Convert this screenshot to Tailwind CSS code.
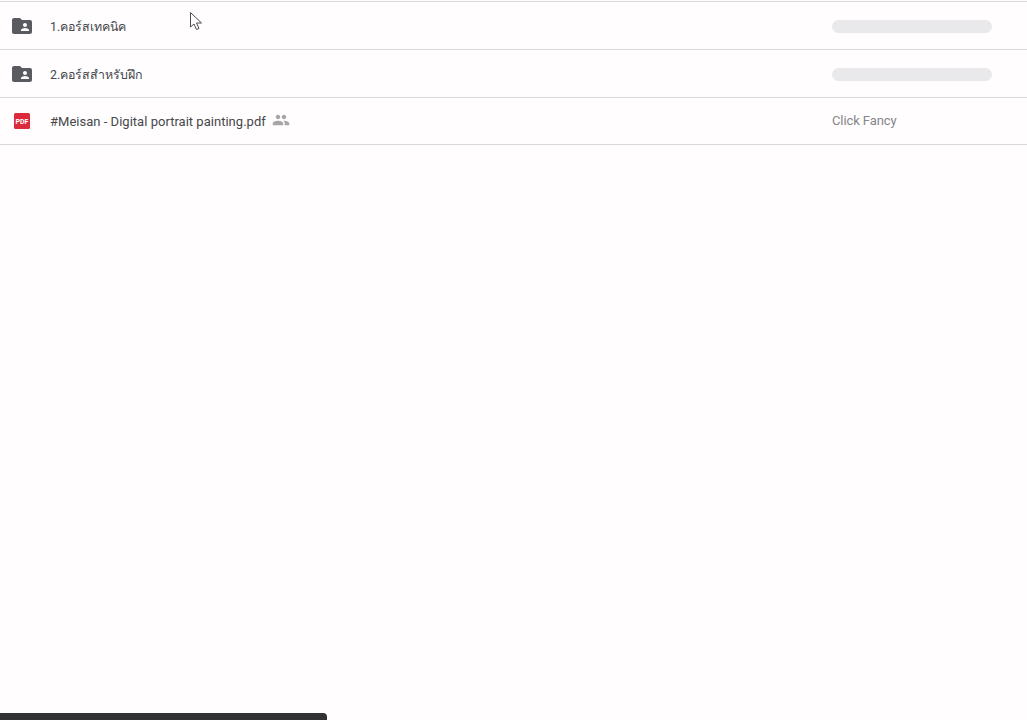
<!DOCTYPE html>
<html lang="th">
<head>
    <meta charset="UTF-8">
    <title>Drive</title>
    <script src="https://cdn.jsdelivr.net/npm/@tailwindcss/browser@4"></script>
</head>

<body class="bg-[#fffdfe] font-['Roboto','Noto_Sans',sans-serif] h-[720px] overflow-hidden relative">
    <!-- File list -->
    <div class="pt-px">
        <div class="flex items-center h-[48px] border-t border-[#d9d8da]">
            <svg class="w-6 h-6 ml-[10px] text-[#5a5b60]" viewBox="0 0 24 24" fill="currentColor"><path d="M10 4H4c-1.100 0-2 .9-2 2v12c0 1.100.9 2 2 2h16c1.100 0 2-.9 2-2V8c0-1.100-.9-2-2-2h-8l-2-2zm5 5c1.100 0 2 .9 2 2s-.9 2-2 2-2-.9-2-2 .9-2 2-2zm4 8h-8v-1c0-1.330 2.670-2 4-2s4 .67 4 2v1z"/></svg>
            <span class="ml-[16px] mt-[3px] text-[12.400px] text-[#46474b]">1.คอร์สเทคนิค</span>
            <div class="ml-auto mr-[35px] mt-[2px] w-[160px] h-[13px] rounded-full bg-[#e9e8ea]"></div>
        </div>
        <div class="flex items-center h-[48px] border-t border-[#d9d8da]">
            <svg class="w-6 h-6 ml-[10px] text-[#5a5b60]" viewBox="0 0 24 24" fill="currentColor"><path d="M10 4H4c-1.100 0-2 .9-2 2v12c0 1.100.9 2 2 2h16c1.100 0 2-.9 2-2V8c0-1.100-.9-2-2-2h-8l-2-2zm5 5c1.100 0 2 .9 2 2s-.9 2-2 2-2-.9-2-2 .9-2 2-2zm4 8h-8v-1c0-1.330 2.670-2 4-2s4 .67 4 2v1z"/></svg>
            <span class="ml-[16px] mt-[3px] text-[12.400px] text-[#46474b]">2.คอร์สสำหรับฝึก</span>
            <div class="ml-auto mr-[35px] mt-[2px] w-[160px] h-[13px] rounded-full bg-[#e9e8ea]"></div>
        </div>
        <div class="flex items-center h-[48px] border-y border-[#d9d8da]">
            <svg class="w-4 h-4 ml-[14px] shrink-0" viewBox="0 0 16 16"><rect width="16" height="16" rx="1.500" fill="#dc2a3c"/><text x="8" y="10.800" text-anchor="middle" font-size="7" font-weight="700" font-family="Roboto" fill="#fff">PDF</text></svg>
            <span class="ml-[20px] mt-[2px] text-[13px] tracking-[0.02px] text-[#46474b]">#Meisan - Digital portrait painting.pdf</span>
            <svg class="w-[18px] h-[18px] ml-[6px] -mt-[2px] text-[#a6a6a9]" viewBox="0 0 24 24" fill="currentColor"><path d="M16 11c1.660 0 2.990-1.340 2.990-3S17.660 5 16 5s-3 1.340-3 3 1.340 3 3 3zm-8 0c1.660 0 2.990-1.340 2.990-3S9.660 5 8 5 5 6.340 5 8s1.340 3 3 3zm0 2c-2.330 0-7 1.170-7 3.500V19h14v-2.500C15 14.170 10.330 13 8 13zm8 0c-.29 0-.62.02-.97.05 1.160.84 1.970 1.970 1.970 3.450V19h6v-2.500c0-2.330-4.670-3.500-7-3.500z"/></svg>
            <span class="ml-auto w-[195px] text-[13px] tracking-[-0.1px] text-[#85858a]">Click Fancy</span>
        </div>
    </div>

    <!-- Mouse cursor -->
    <svg class="absolute left-[189px] top-[11px] w-[15px] h-[20px]" viewBox="0 0 15 20"><path d="M1.500 1.500v14.500l3.500-3 2.500 5.500 2.500-1-2.500-5.500h5z" fill="#fff" stroke="#4a4b50" stroke-width="1"/></svg>

    <!-- Snackbar peeking in at the bottom -->
    <div class="absolute left-0 bottom-0 w-[327px] h-[7px] bg-[#323235] rounded-tr-[4px]"></div>
</body>
</html>
